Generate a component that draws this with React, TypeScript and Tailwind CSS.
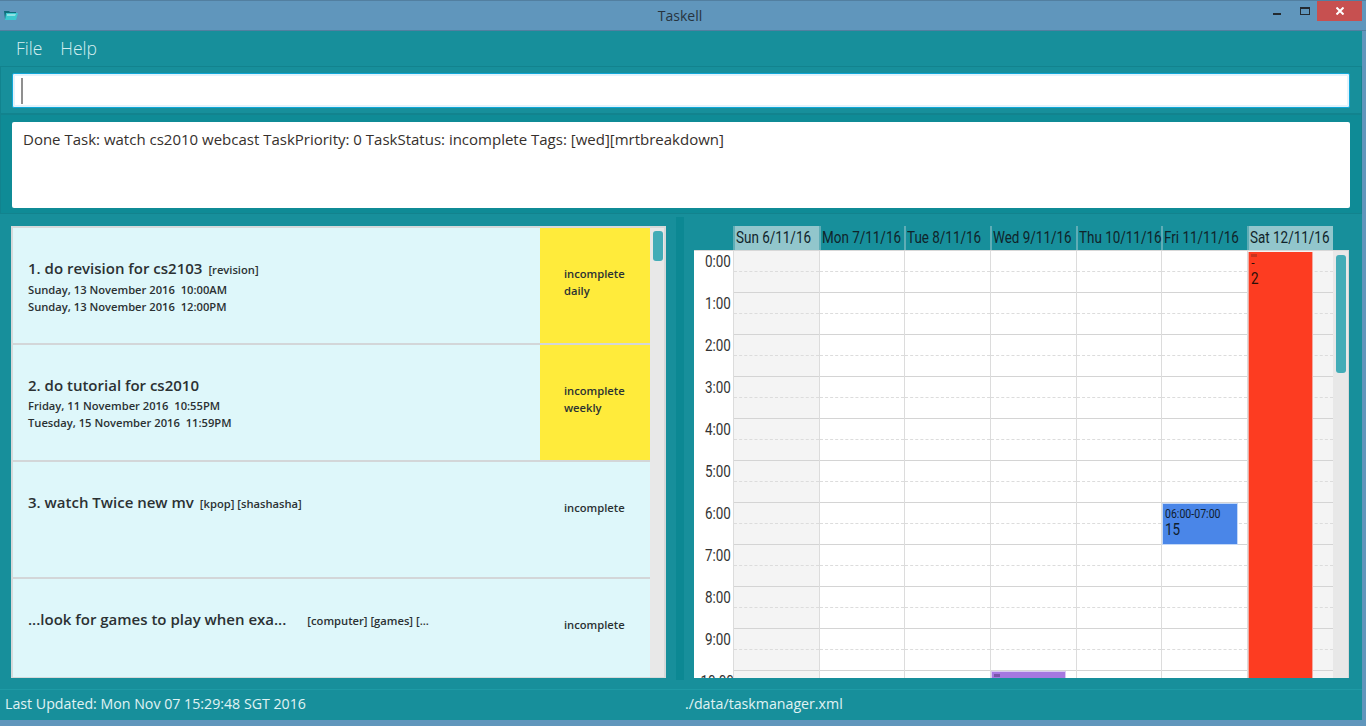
const UI = "font-['Open_Sans','Noto_Sans',sans-serif]";

interface Task {
  title: string;
  tags: string;
  tagGap?: string;
  lines: string[];
  status: string[];
  yellow?: boolean;
}

const tasks: Task[] = [
  {
    title: "1. do revision for cs2103",
    tags: "[revision]",
    lines: ["Sunday, 13 November 2016  10:00AM", "Sunday, 13 November 2016  12:00PM"],
    status: ["incomplete", "daily"],
    yellow: true,
  },
  {
    title: "2. do tutorial for cs2010",
    tags: "",
    lines: ["Friday, 11 November 2016  10:55PM", "Tuesday, 15 November 2016  11:59PM"],
    status: ["incomplete", "weekly"],
    yellow: true,
  },
  {
    title: "3. watch Twice new mv",
    tags: "[kpop] [shashasha]",
    lines: [],
    status: ["incomplete"],
  },
  {
    title: "...look for games to play when exa...",
    tags: "[computer] [games] [...",
    tagGap: "ml-[21px]",
    lines: [],
    status: ["incomplete"],
  },
];

const days = [
  { label: "Sun 6/11/16", weekend: true },
  { label: "Mon 7/11/16" },
  { label: "Tue 8/11/16" },
  { label: "Wed 9/11/16" },
  { label: "Thu 10/11/16" },
  { label: "Fri 11/11/16" },
  { label: "Sat 12/11/16", weekend: true },
];

const hours = ["0:00", "1:00", "2:00", "3:00", "4:00", "5:00", "6:00", "7:00", "8:00", "9:00", "10:00"];

function TaskCard({ task }: { task: Task }) {
  return (
    <div className="flex h-[117px] shrink-0 border-b-2 border-[#d3d6d8] bg-[#def7fa]">
      <div className="min-w-0 flex-1 pl-[15px]">
        <div className="mt-[30px] flex items-baseline whitespace-nowrap">
          <span className="text-[15px] leading-[20px] font-semibold text-[#2b3133]">{task.title}</span>
          {task.tags && (
            <span className={`${task.tagGap ?? "ml-[6px]"} text-[11.2px] font-semibold text-[#2b3133]`}>{task.tags}</span>
          )}
        </div>
        <div className="mt-[2px] flex flex-col">
          {task.lines.map((line) => (
            <span key={line} className="text-[11.2px] leading-[17px] font-semibold whitespace-pre text-[#2b3133]">
              {line}
            </span>
          ))}
        </div>
      </div>
      <div
        className={`flex w-[110px] shrink-0 flex-col pt-[37px] pl-[24px] text-[11.2px] leading-[17px] font-semibold text-[#2b3133] ${
          task.yellow ? "bg-[#ffeb3b]" : ""
        }`}
      >
        {task.status.map((s) => (
          <span key={s}>{s}</span>
        ))}
      </div>
    </div>
  );
}

function TaskList() {
  return (
    <div className="ml-[11px] flex h-[452px] w-[655px] overflow-hidden border-2 border-b border-[#d6d9da] bg-[#e8e8e8]">
      <div className="flex w-[637px] shrink-0 flex-col">
        {tasks.map((t) => (
          <TaskCard key={t.title} task={t} />
        ))}
      </div>
      <div className="flex-1 pt-[3px] pl-[3px]">
        <div className="h-[30px] w-[10px] rounded-[3px] bg-[#42acb7]" />
      </div>
    </div>
  );
}

function DayColumn({ weekend, children }: { weekend?: boolean; children?: React.ReactNode }) {
  return (
    <div className={`relative w-[85.7px] shrink-0 border-l border-[#dcdcdc] ${weekend ? "bg-[#f4f4f4]" : "bg-white"}`}>
      {hours.map((h) => (
        <div key={h} className="h-[42px] border-b border-[#d4d4d4]">
          <div className="h-[21px] border-b border-dashed border-[#dcdcdc]" />
        </div>
      ))}
      {children}
    </div>
  );
}

function Calendar() {
  return (
    <div className="flex h-[452px] w-[655px] flex-col font-['Roboto',sans-serif]">
      <div className="flex h-[24px] shrink-0 pl-[39px] text-[16px] leading-[24px] text-[#10242a]">
        {days.map((d) => (
          <div
            key={d.label}
            className={`w-[85.7px] shrink-0 border-l-2 border-[#5fadb6] pl-[1px] whitespace-nowrap ${
              d.weekend ? "bg-[#92c6cc]" : "bg-[#178f9b]"
            }`}
          >
            <span className="inline-block origin-left scale-x-[0.84]">{d.label}</span>
          </div>
        ))}
      </div>
      <div className="flex h-[428px] overflow-hidden border-t border-r border-[#d8d8d8] bg-white">
        <div className="w-[39px] shrink-0">
          {hours.map((h) => (
            <div key={h} className="h-[42px] pr-[2px] text-right text-[16px] leading-[21px] text-[#333]">
              <span className="inline-block origin-right scale-x-[0.84]">{h}</span>
            </div>
          ))}
        </div>
        {days.map((d, i) => (
          <DayColumn key={d.label} weekend={d.weekend}>
            {i === 3 && (
              <div className="absolute top-[420px] left-[0px] h-[20px] w-[75px] border border-[#d9c8f2] bg-[#a578e0] pt-[2px] pl-[2px]">
                <div className="h-[3px] w-[6px] bg-[#7a55a8]" />
              </div>
            )}
            {i === 5 && (
              <div className="absolute top-[252px] left-[0px] flex h-[42px] w-[76px] flex-col border border-[#c3d8f7] bg-[#4a86e8] pl-[2px] text-[#10202f]">
                <span className="mt-[3px] origin-left scale-x-[0.88] text-[12px] leading-[14px] whitespace-nowrap">06:00-07:00</span>
                <span className="origin-left scale-x-[0.84] text-[16px] leading-[18px]">15</span>
              </div>
            )}
            {i === 6 && (
              <div className="absolute top-[1px] left-[0px] flex h-[430px] w-[65px] flex-col border-x border-[#f2a9a0] bg-[#fd3c21] pl-[2px] text-[#2a0f08]">
                <div className="mt-[2px] h-[3px] w-[6px] bg-[#c8341e]" />
                <span className="h-[12px] text-[12px] leading-[12px]">-</span>
                <span className="origin-left scale-x-[0.84] text-[16px] leading-[20px]">2</span>
              </div>
            )}
          </DayColumn>
        ))}
        <div className="w-[16px] shrink-0 bg-[#e8e8e8] pt-[4px] pl-[3px]">
          <div className="h-[118px] w-[10px] rounded-[3px] bg-[#42acb7]" />
        </div>
      </div>
    </div>
  );
}

export default function App() {
  return (
    <div className={`flex h-[726px] w-[1366px] flex-col overflow-hidden bg-[#6096bc] ${UI}`}>
      {/* title bar */}
      <div className="relative flex h-[31px] shrink-0 items-center justify-center border-t border-b border-[#527fa0] bg-[#6096bc]">
        <svg className="absolute top-[8px] left-[3px] h-[12px] w-[16px]" viewBox="0 0 16 12">
          <path d="M1 2h5l1 1h6v7H2z" fill="#0e6d7a" />
          <path d="M3 4h12l-2 7H2z" fill="#3cc8cf" />
          <path d="M4 5h9l-1 2H4z" fill="#8fe0e4" />
        </svg>
        <span className="-mt-[1px] pr-[6px] text-[14px] text-[#27343f]">Taskell</span>
        <div className="absolute top-[12px] right-[85px] h-[2px] w-[8px] bg-[#232a30]" />
        <div className="absolute top-[6px] right-[56px] h-[8px] w-[10px] border border-t-2 border-[#232a30]" />
        <div className="absolute top-[0px] right-[4px] flex h-[20px] w-[45px] items-center justify-center bg-[#c75050]">
          <svg className="h-[8px] w-[8px]" viewBox="0 0 8 8">
            <path d="M0.5 0.5L7.5 7.5M7.5 0.5L0.5 7.5" stroke="#fff" strokeWidth="2" />
          </svg>
        </div>
      </div>

      <div className="mr-[4px] flex h-[689px] shrink-0 flex-col bg-[#178f9b]">
        {/* menu */}
        <div className="flex h-[35px] shrink-0 items-center gap-[18px] pb-[1px] pl-[16px] text-[17.5px] font-light text-[#d5eef0]">
          <span>File</span>
          <span>Help</span>
        </div>

        {/* command box */}
        <div className="flex h-[48px] shrink-0 items-start border border-[#12838e] px-[11px] pt-[6px]">
          <div className="flex h-[35px] w-full items-center rounded-[2px] border border-[#10a7d8] bg-white pl-[8px] shadow-[inset_0_0_0_2px_#e3f3fb]">
            <div className="h-[26px] w-[2px] bg-[#8f8f8f]" />
          </div>
        </div>

        {/* result box */}
        <div className="flex h-[100px] shrink-0 border border-[#12838e] bg-[#0f8b96] px-[11px] pt-[7px]">
          <div className="h-[86px] w-full rounded-[2px] bg-white pt-[6px] pl-[11px] text-[15px] leading-[22px] text-[#36302c]">
            Done Task: watch cs2010 webcast TaskPriority: 0 TaskStatus: incomplete Tags: [wed][mrtbreakdown]
          </div>
        </div>

        {/* split pane */}
        <div className="flex h-[475px] shrink-0 pt-[12px]">
          <TaskList />
          <div className="ml-[10px] h-[463px] w-[8px] -mt-[9px] bg-[#0c8893]" />
          <div className="ml-[10px]">
            <Calendar />
          </div>
        </div>

        {/* status bar */}
        <div className="flex h-[31px] shrink-0 items-center border-t border-[#1e9aa5] pb-[2px] text-[14.2px] text-[#e0f3f4]">
          <span className="w-[685px] pl-[5px]">Last Updated: Mon Nov 07 15:29:48 SGT 2016</span>
          <span>./data/taskmanager.xml</span>
        </div>
      </div>
    </div>
  );
}
